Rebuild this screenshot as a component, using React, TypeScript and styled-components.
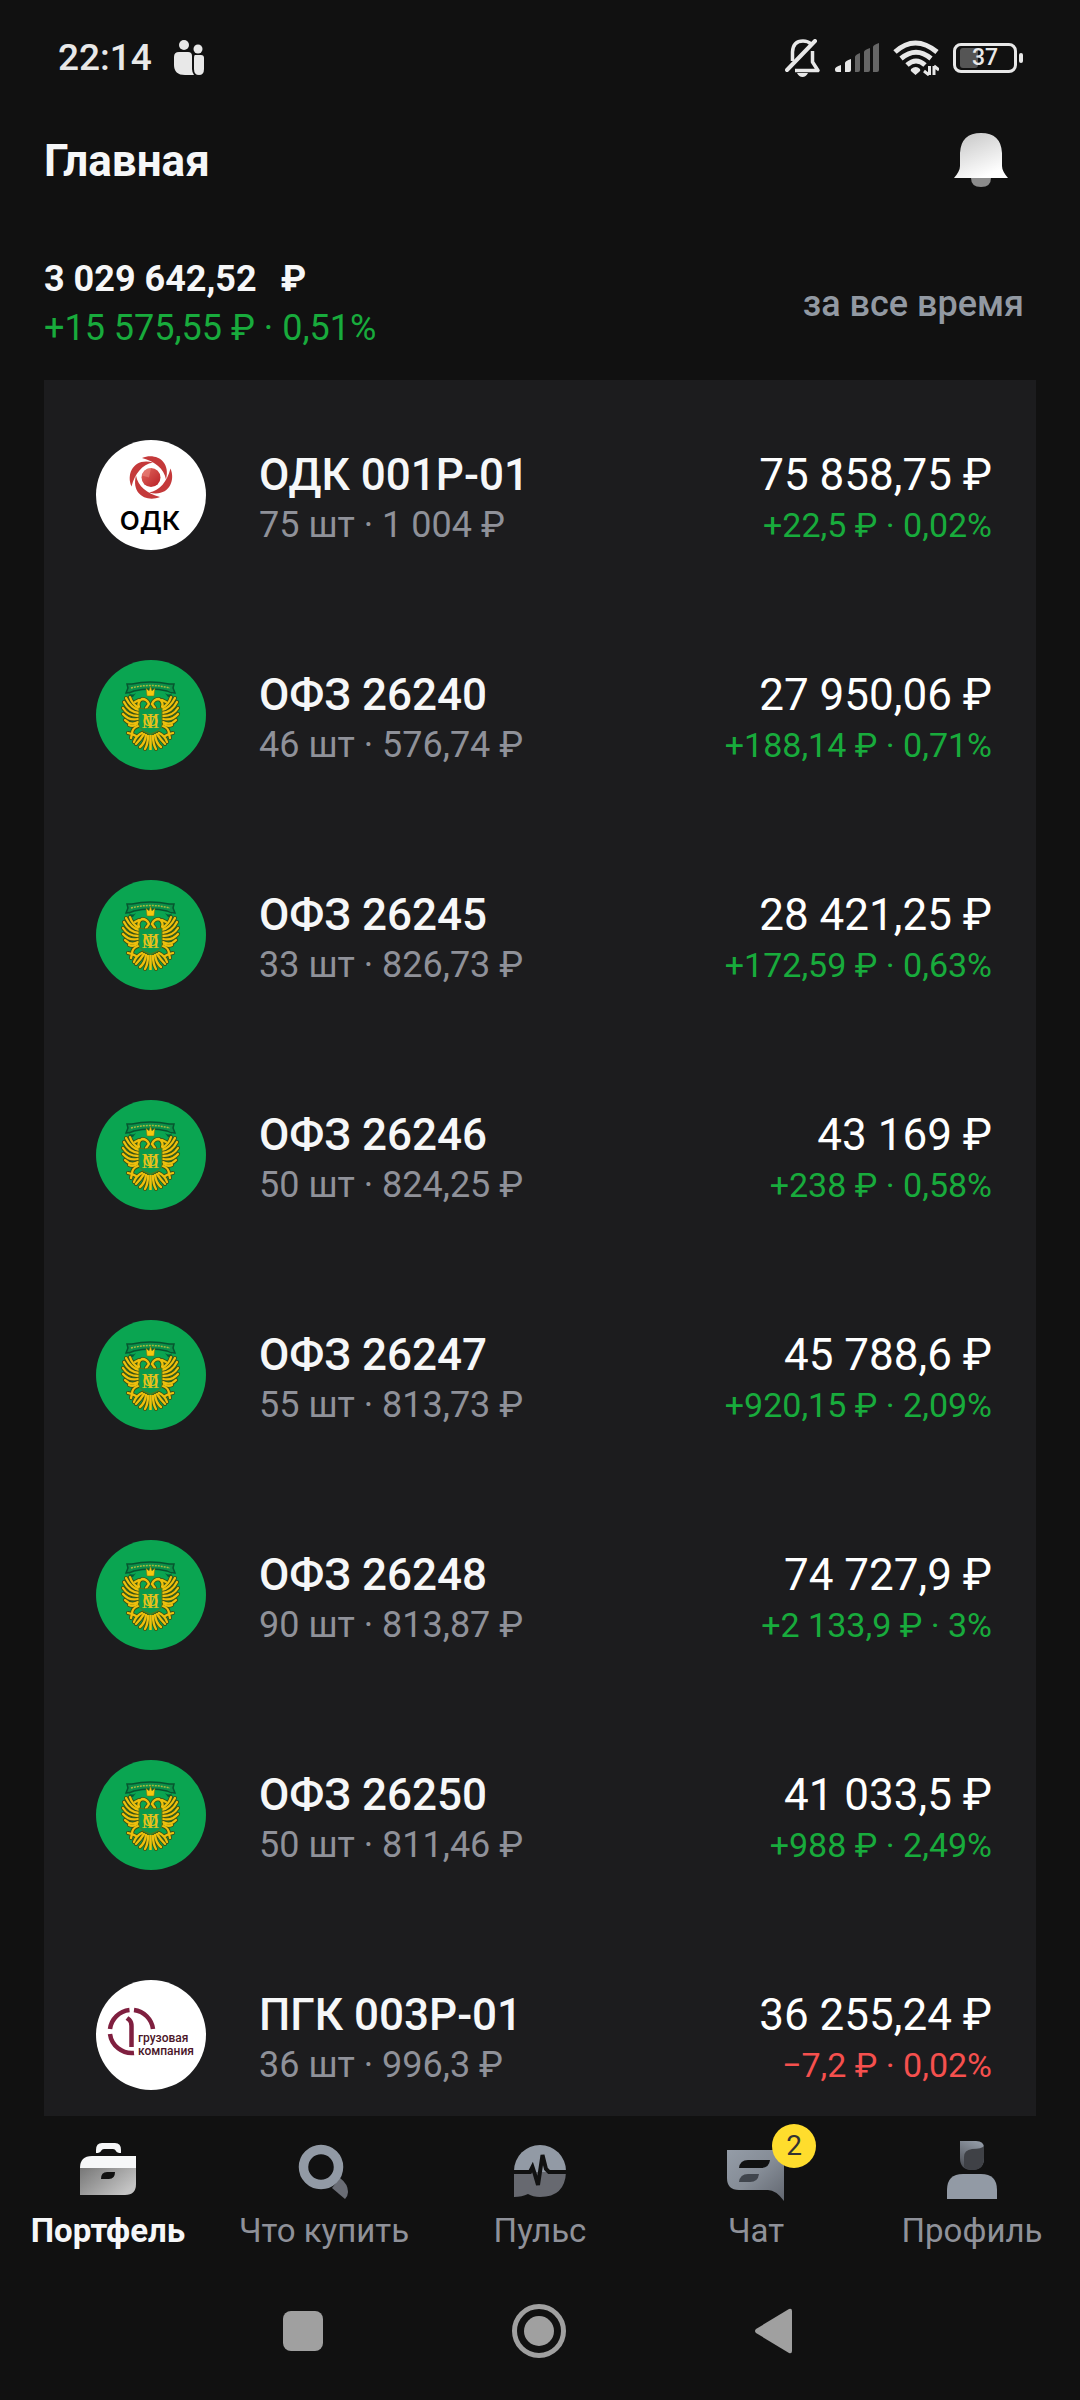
import type { ReactNode } from "react";
import styled, { createGlobalStyle } from "styled-components";

const GlobalStyle = createGlobalStyle`
  * {
    box-sizing: border-box;
  }

  body {
    margin: 0;
    background: #111111;
    color: #f6f7f8;
    font-family: Roboto, "Noto Sans", sans-serif;
  }

  button {
    padding: 0;
    border: 0;
    background: none;
    color: inherit;
    font: inherit;
    cursor: pointer;
  }

  a {
    color: inherit;
    text-decoration: none;
  }

  svg {
    display: block;
    flex: none;
  }
`;

const Page = styled.div`
  display: flex;
  flex-direction: column;
  min-height: 100vh;
`;

const StatusBar = styled.div`
  display: flex;
  align-items: center;
  justify-content: space-between;
  height: 116px;
  padding: 0 58px;
  color: #e8e8e8;
`;

const StatusGroup = styled.div<{ $gap: number }>`
  display: flex;
  align-items: center;
  gap: ${(props) => props.$gap}px;
`;

const Clock = styled.time`
  font-size: 37px;
  font-weight: 500;
  line-height: 48px;
`;

const Battery = styled.div`
  position: relative;
  display: flex;
  align-items: center;
  justify-content: center;
  width: 64px;
  height: 30px;
  margin-right: 5px;
  border: 3px solid #e8e8e8;
  border-radius: 8px;
  font-size: 23px;
  font-weight: 500;
  line-height: 24px;

  span {
    position: relative;
  }

  &::before {
    content: "";
    position: absolute;
    top: 2px;
    bottom: 2px;
    left: 4px;
    width: 18px;
    border-radius: 3px;
    background: #555555;
  }

  &::after {
    content: "";
    position: absolute;
    top: 7px;
    right: -9px;
    width: 4px;
    height: 10px;
    border-radius: 2px;
    background: #e8e8e8;
  }
`;

const Header = styled.header`
  display: flex;
  align-items: center;
  justify-content: space-between;
  height: 90px;
  padding: 0 44px;
`;

const Title = styled.h1`
  margin: 0;
  font-size: 44px;
  font-weight: 700;
  line-height: 50px;
`;

const BellButton = styled.button`
  display: flex;
  align-items: center;
  justify-content: center;
  width: 110px;
  height: 90px;
`;

const Summary = styled.section`
  display: flex;
  align-items: center;
  justify-content: space-between;
  padding: 49px 56px 27px 44px;
`;

const Balance = styled.p`
  display: flex;
  gap: 24px;
  margin: 0;
  font-size: 36px;
  font-weight: 700;
  line-height: 49px;
`;

const Delta = styled.p<{ $down?: boolean; $large?: boolean }>`
  margin: 0;
  color: ${(props) => (props.$down ? "#f5504e" : "#18ab3c")};
  font-size: ${(props) => (props.$large ? 36 : 34)}px;
  line-height: ${(props) => (props.$large ? 49 : 50)}px;
`;

const PeriodButton = styled.button`
  color: #9299a2;
  font-size: 36px;
  font-weight: 500;
  line-height: 49px;
`;

const List = styled.ul`
  display: flex;
  flex: 1;
  flex-direction: column;
  gap: 110px;
  margin: 0 44px;
  padding: 60px 44px 26px 52px;
  background: #1c1c1e;
  list-style: none;
`;

const Row = styled.a`
  display: flex;
  align-items: center;
  gap: 53px;
`;

const RowText = styled.div<{ $end?: boolean }>`
  ${(props) => (props.$end ? "margin-left: auto; text-align: right;" : "")}
  padding-top: 10px;
  white-space: nowrap;
`;

const Name = styled.p`
  margin: 0;
  font-size: 44px;
  font-weight: 500;
  line-height: 50px;
`;

const Details = styled.p`
  margin: 0;
  color: #8f9199;
  font-size: 36px;
  line-height: 50px;
`;

const Amount = styled.p`
  margin: 0;
  color: #ffffff;
  font-size: 44px;
  line-height: 50px;
`;

const Tabs = styled.nav`
  display: grid;
  grid-template-columns: repeat(5, 1fr);
  padding: 18px 0 11px;
`;

const Tab = styled.a<{ $active?: boolean }>`
  display: flex;
  flex-direction: column;
  align-items: center;
  gap: 5px;
  color: ${(props) => (props.$active ? "#f6f7f8" : "#8f9199")};
  font-size: 33px;
  font-weight: ${(props) => (props.$active ? 700 : 400)};
  line-height: 40px;
  white-space: nowrap;
`;

const TabIcon = styled.span`
  position: relative;
  width: 72px;
  height: 72px;
`;

const Badge = styled.span`
  position: absolute;
  top: -10px;
  left: 52px;
  width: 44px;
  height: 44px;
  border-radius: 50%;
  background: #ffdd2d;
  color: #333333;
  font-size: 28px;
  font-weight: 400;
  line-height: 44px;
  text-align: center;
`;

const SystemNav = styled.div`
  display: flex;
  align-items: center;
  justify-content: center;
  gap: 164px;
  height: 138px;
`;

function FamilyIcon() {
  return (
    <svg width="30" height="36" viewBox="0 0 30 36" fill="#e8e8e8">
      <circle cx="10" cy="5" r="5" />
      <circle cx="24" cy="9" r="4.500" />
      <path d="M5 12h9q4 0 4 4v13q0 3 2 6h-9Q0 35 0 25v-8q0-5 5-5z" />
      <path d="M21 15h6q3 0 3 3v11q0 6-5 6t-5-6V18q0-3 1-3z" />
    </svg>
  );
}

function MutedIcon() {
  return (
    <svg
      width="36"
      height="38"
      viewBox="0 0 36 38"
      fill="none"
      stroke="#e8e8e8"
      strokeWidth="3.500"
    >
      <path d="M7.500 22V13Q8 2 18 2q5 0 8 3" />
      <path d="M27.500 12v11l5.500 8.500H10" strokeLinejoin="round" />
      <path d="M2 31 30 2" strokeWidth="4" strokeLinecap="round" />
      <path d="M12 34h11q-2 4-5.500 4T12 34z" fill="#e8e8e8" stroke="none" />
    </svg>
  );
}

function SignalIcon() {
  return (
    <svg width="44" height="30" viewBox="0 0 44 30" fill="#e8e8e8">
      <path d="M0 26q0-2 6-4v7H2q-2 0-2-2z" />
      <path d="M10 20q0-2 6-4v11q0 2-2 2h-4z" />
      <path d="M20 14q0-2 5-4v17q0 2-2 2h-3z" fill="#666666" />
      <path d="M29 9q0-2 6-4v22q0 2-2 2h-4z" fill="#666666" />
      <path d="M38 4q0-2 6-4v27q0 2-2 2h-4z" fill="#666666" />
    </svg>
  );
}

function WifiIcon() {
  return (
    <svg
      width="46"
      height="36"
      viewBox="0 0 46 36"
      fill="none"
      stroke="#e8e8e8"
      strokeWidth="5"
    >
      <path d="M2 12Q22-6 44 12" />
      <path d="M8 18.500Q23 6 38 18.500" />
      <path d="M14 25q9-8 18 0" />
      <path
        d="M18 29q5-4 9 0 1 2-1 3l-3.500 3L19 32q-2-1-1-3z"
        fill="#e8e8e8"
        stroke="none"
      />
      <path d="M36.500 26v9M41 35v-9M31 31l5 4M46 30l-5-4" strokeWidth="3" />
    </svg>
  );
}

function BellIcon() {
  return (
    <svg width="56" height="56" viewBox="0 0 56 56">
      <defs>
        <linearGradient id="bell" x1="0" y1="0" x2="0.500" y2="1">
          <stop offset="0" stopColor="#c4c4c4" />
          <stop offset="1" stopColor="#ffffff" />
        </linearGradient>
      </defs>
      <path d="M18 45h20q0 9-10 9t-10-9z" fill="#8c8c8c" />
      <path
        d="M1 45Q7 38 7 33V20Q8 0 28 0t21 20v13q0 5 6 12z"
        fill="url(#bell)"
      />
    </svg>
  );
}

function OdkLogo() {
  return (
    <svg width="110" height="110" viewBox="0 0 110 110" aria-hidden="true">
      <defs>
        <linearGradient id="odk" x1="0" y1="0" x2="1" y2="1">
          <stop offset="0" stopColor="#e2685f" />
          <stop offset="1" stopColor="#b81f25" />
        </linearGradient>
      </defs>
      <circle cx="55" cy="55" r="55" fill="#ffffff" />
      <g transform="translate(55 37.500)">
        {[0, 90, 180, 270].map((angle) => (
          <path
            key={angle}
            transform={`rotate(${angle})`}
            d="M-9-19.500C4-25 20-17 15 2 13-9 4-16-9-19.500z"
            fill="#c4393a"
          />
        ))}
        <circle r="9.500" fill="url(#odk)" />
        <path
          d="M-2 0 0-9.500A9.500 9.500 0 0 0-9-2z"
          fill="#f0938a"
          opacity="0.500"
        />
      </g>
      <text
        x="54"
        y="90"
        textAnchor="middle"
        fontFamily="Inter, sans-serif"
        fontSize="26"
        fontWeight="600"
        fill="#000000"
      >
        ОДК
      </text>
    </svg>
  );
}

function PgkLogo() {
  return (
    <svg width="110" height="110" viewBox="0 0 110 110" aria-hidden="true">
      <circle cx="55" cy="55" r="55" fill="#ffffff" />
      <g fill="none" stroke="#7f1f3f" strokeWidth="4.500">
        <path d="M14 49A22 22 0 0 1 33.500 30" />
        <path d="M38 30A22 22 0 0 1 57 49" />
        <path d="M14 54A22 22 0 0 0 38 73" />
        <path d="m31 38 2.500 2q2 2 2 6v21" />
      </g>
      <g
        fontFamily="Roboto, sans-serif"
        fontSize="12"
        fontWeight="500"
        fill="#4a1528"
      >
        <text x="42" y="62">
          грузовая
        </text>
        <text x="42" y="75">
          компания
        </text>
      </g>
    </svg>
  );
}

// Left half of the eagle, the right one is its mirror
const EAGLE_LINES = [
  "M43 50Q35 48 30 38",
  "M43 53Q33 52 28 42",
  "M42 56Q32 56 27 48",
  "M42 59Q33 61 27 54",
  "M42 62Q35 66 29 60",
  "M43 48Q36 44 34 37",
  "M41 64q-4 3-8 1",
  "M43 47q-2-5 3-8 5 0 7 5l-3 4",
  "M43 40l-4 2",
  "M42 66q-6 2-6 8l-4-1M36 74l-1 4M36 74l4 2",
  "M46 73q-6 3-8 9",
  "M48 74q-4 6-8 10",
  "M50 75q-1 8-6 12",
  "M52 76q0 8-3 13",
];

function EagleHalf({ mirrored }: { mirrored?: boolean }) {
  return (
    <g
      transform={mirrored ? "translate(109 0) scale(-1 1)" : undefined}
      fill="none"
      strokeLinecap="round"
    >
      {EAGLE_LINES.map((d) => (
        <path key={d} d={d} stroke="#3a4f14" strokeWidth="4" />
      ))}
      {EAGLE_LINES.map((d) => (
        <path key={d} d={d} stroke="#edc00d" strokeWidth="2.300" />
      ))}
      <path d="M33 33q3 3 7 0l-3 4q-3 0-4-4z" fill="#075c35" />
    </g>
  );
}

function OfzLogo() {
  return (
    <svg width="110" height="110" viewBox="0 0 110 110" aria-hidden="true">
      <circle cx="55" cy="55" r="55" fill="#0aa551" />
      <path
        d="M31 24h5q18-4 37 0h5l-1 4 2 5q-5 0-8-2-16-4-33 0-4 2-8 2l2-5z"
        fill="#0b8f49"
        stroke="#07552f"
        strokeWidth="1.500"
      />
      <path
        d="M35 28q19-5 39 0"
        fill="none"
        stroke="#a9b93c"
        strokeWidth="1.500"
        strokeDasharray="2 1"
      />
      <EagleHalf />
      <EagleHalf mirrored />
      <path
        d="m50 28 3 3 1.500-5 1.500 5 3-3-1 8h-7z"
        fill="#f5c90f"
        stroke="#6d6a12"
        strokeWidth="0.500"
      />
      <path
        d="M43 48q6 2 11.500 0 6 2 11.500 0v17q0 5-11.500 9Q43 70 43 65z"
        fill="#0b9a4c"
        stroke="#5f7a14"
        strokeWidth="1"
      />
      <g
        fontFamily="'Liberation Serif', serif"
        fontSize="20"
        fill="#e6c21a"
        textAnchor="middle"
      >
        <text x="54.500" y="68">
          М
        </text>
        <text x="54.500" y="68">
          Ф
        </text>
      </g>
      <path d="M54.500 75v15" stroke="#edc00d" strokeWidth="2.500" />
    </svg>
  );
}

function PortfolioIcon() {
  return (
    <svg width="72" height="72" viewBox="0 0 72 72">
      <defs>
        <linearGradient id="case" x1="0" y1="0" x2="1" y2="0.600">
          <stop offset="0" stopColor="#777777" />
          <stop offset="1" stopColor="#c4c4c4" />
        </linearGradient>
      </defs>
      <path
        d="M24 19v-3q0-7 6-7h13q6 0 6 7v3q-4 0-5-2-1-2-3-2h-9q-2 0-3 2-1 2-5 2z"
        fill="#f6f7f8"
      />
      <path d="M8 34q0-12 12-12h44v12z" fill="#f6f7f8" />
      <path
        d="M8 34h56v16q0 11-11 11H8zM29 45h8q6 0 6-7h-8q-6 0-6 7z"
        fill="url(#case)"
        fillRule="evenodd"
      />
    </svg>
  );
}

function SearchIcon() {
  return (
    <svg width="72" height="72" viewBox="0 0 72 72">
      <path d="m44 54 8-10q8 6 8 14 0 4-3 7z" fill="#6a6d75" />
      <circle
        cx="33"
        cy="33"
        r="17.500"
        fill="none"
        stroke="#929aa5"
        strokeWidth="9.500"
      />
    </svg>
  );
}

function PulseIcon() {
  return (
    <svg width="72" height="72" viewBox="0 0 72 72">
      <path d="M10 37a26 26 0 0 1 52 0v1H10z" fill="#929aa5" />
      <path d="M10 38h52q-1 25-26 25-7 0-12-3-6 3-14 3z" fill="#676970" />
      <path
        d="M10 38h16l2.500-5 2 6 3.500 12 4.500-30 3.500 14 3 3h17"
        fill="none"
        stroke="#111111"
        strokeWidth="4"
      />
    </svg>
  );
}

function ChatIcon() {
  return (
    <svg width="72" height="72" viewBox="0 0 72 72">
      <defs>
        <linearGradient id="chat" x1="0" y1="0" x2="1" y2="1">
          <stop offset="0" stopColor="#949ca7" />
          <stop offset="0.500" stopColor="#858c96" />
          <stop offset="1" stopColor="#626770" />
        </linearGradient>
      </defs>
      <path d="M7 16h57v51Q56 56 48 56H19Q7 56 7 44z" fill="url(#chat)" />
      <path d="M19 34q1-8 9-8h22q-1 8-9 8z" fill="#111111" />
      <path d="M19 48q1-8 9-8h11q-1 8-9 8z" fill="#40454d" />
    </svg>
  );
}

function ProfileIcon() {
  return (
    <svg width="72" height="72" viewBox="0 0 72 72">
      <defs>
        <linearGradient id="hair" x1="0.700" y1="0" x2="0.300" y2="1">
          <stop offset="0" stopColor="#929aa5" />
          <stop offset="1" stopColor="#4b4e55" />
        </linearGradient>
      </defs>
      <path d="M24 7h16q8 0 8 7v10q0 12-12 12T24 24z" fill="url(#hair)" />
      <path
        d="M28 33V23q0-7 8-8 10 0 12-3v12q0 12-12 12-5 0-8-3z"
        fill="#3f4146"
      />
      <path d="M11 65V56q0-16 16-16h18q16 0 16 16v9z" fill="#929aa5" />
    </svg>
  );
}

type Holding = {
  name: string;
  details: string;
  amount: string;
  delta: string;
  down?: boolean;
  logo: ReactNode;
};

const HOLDINGS: Holding[] = [
  {
    name: "ОДК 001P-01",
    details: "75 шт · 1 004 ₽",
    amount: "75 858,75 ₽",
    delta: "+22,5 ₽ · 0,02%",
    logo: <OdkLogo />,
  },
  {
    name: "ОФЗ 26240",
    details: "46 шт · 576,74 ₽",
    amount: "27 950,06 ₽",
    delta: "+188,14 ₽ · 0,71%",
    logo: <OfzLogo />,
  },
  {
    name: "ОФЗ 26245",
    details: "33 шт · 826,73 ₽",
    amount: "28 421,25 ₽",
    delta: "+172,59 ₽ · 0,63%",
    logo: <OfzLogo />,
  },
  {
    name: "ОФЗ 26246",
    details: "50 шт · 824,25 ₽",
    amount: "43 169 ₽",
    delta: "+238 ₽ · 0,58%",
    logo: <OfzLogo />,
  },
  {
    name: "ОФЗ 26247",
    details: "55 шт · 813,73 ₽",
    amount: "45 788,6 ₽",
    delta: "+920,15 ₽ · 2,09%",
    logo: <OfzLogo />,
  },
  {
    name: "ОФЗ 26248",
    details: "90 шт · 813,87 ₽",
    amount: "74 727,9 ₽",
    delta: "+2 133,9 ₽ · 3%",
    logo: <OfzLogo />,
  },
  {
    name: "ОФЗ 26250",
    details: "50 шт · 811,46 ₽",
    amount: "41 033,5 ₽",
    delta: "+988 ₽ · 2,49%",
    logo: <OfzLogo />,
  },
  {
    name: "ПГК 003P-01",
    details: "36 шт · 996,3 ₽",
    amount: "36 255,24 ₽",
    delta: "−7,2 ₽ · 0,02%",
    down: true,
    logo: <PgkLogo />,
  },
];

const TABS = [
  { label: "Портфель", href: "#portfolio", icon: <PortfolioIcon />, active: true },
  { label: "Что купить", href: "#market", icon: <SearchIcon /> },
  { label: "Пульс", href: "#pulse", icon: <PulseIcon /> },
  { label: "Чат", href: "#chat", icon: <ChatIcon />, badge: 2 },
  { label: "Профиль", href: "#profile", icon: <ProfileIcon /> },
];

export default function App() {
  return (
    <Page>
      <GlobalStyle />
      <StatusBar>
        <StatusGroup $gap={22}>
          <Clock>22:14</Clock>
          <FamilyIcon />
        </StatusGroup>
        <StatusGroup $gap={14}>
          <MutedIcon />
          <SignalIcon />
          <WifiIcon />
          <Battery>
            <span>37</span>
          </Battery>
        </StatusGroup>
      </StatusBar>

      <Header>
        <Title>Главная</Title>
        <BellButton aria-label="Уведомления">
          <BellIcon />
        </BellButton>
      </Header>

      <Summary>
        <div>
          <Balance>
            <span>3 029 642,52</span>
            <span>₽</span>
          </Balance>
          <Delta $large>+15 575,55 ₽ · 0,51%</Delta>
        </div>
        <PeriodButton>за все время</PeriodButton>
      </Summary>

      <List>
        {HOLDINGS.map((item) => (
          <li key={item.name}>
            <Row href="#portfolio">
              {item.logo}
              <RowText>
                <Name>{item.name}</Name>
                <Details>{item.details}</Details>
              </RowText>
              <RowText $end>
                <Amount>{item.amount}</Amount>
                <Delta $down={item.down}>{item.delta}</Delta>
              </RowText>
            </Row>
          </li>
        ))}
      </List>

      <Tabs>
        {TABS.map((tab) => (
          <Tab key={tab.label} href={tab.href} $active={tab.active}>
            <TabIcon>
              {tab.icon}
              {tab.badge && <Badge>{tab.badge}</Badge>}
            </TabIcon>
            {tab.label}
          </Tab>
        ))}
      </Tabs>

      <SystemNav>
        <button aria-label="Недавние">
          <svg width="72" height="72" viewBox="0 0 72 72" fill="#a0a0a0">
            <rect x="15" y="16" width="40" height="40" rx="8" />
          </svg>
        </button>
        <button aria-label="Домой">
          <svg width="72" height="72" viewBox="0 0 72 72" fill="#a0a0a0">
            <circle cx="35" cy="36" r="15" />
            <circle
              cx="35"
              cy="36"
              r="24.500"
              fill="none"
              stroke="#a0a0a0"
              strokeWidth="5"
            />
          </svg>
        </button>
        <button aria-label="Назад">
          <svg width="72" height="72" viewBox="0 0 72 72" fill="#a0a0a0">
            <path d="M16 34 49 14q3-1 3 2v40q0 3-3 2L16 38q-2-2 0-4z" />
          </svg>
        </button>
      </SystemNav>
    </Page>
  );
}
